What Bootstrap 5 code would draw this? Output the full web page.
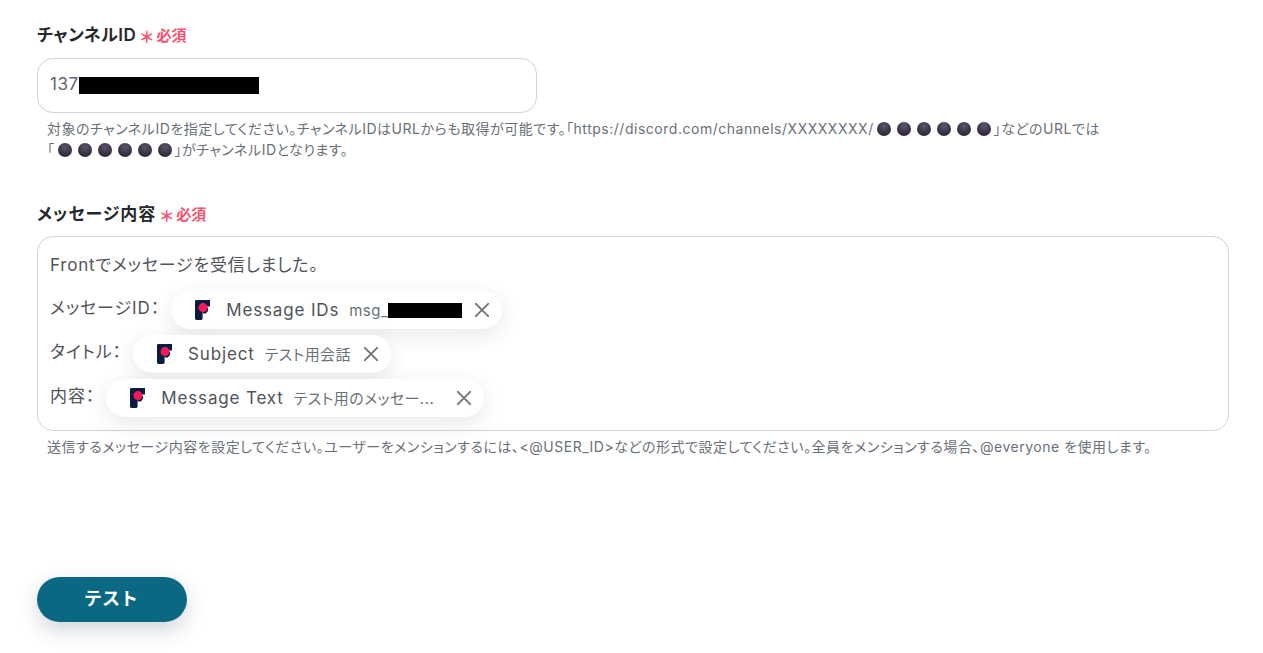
<!DOCTYPE html>
<html lang="ja">
<head>
<meta charset="utf-8">
<title>Form</title>
<link href="https://cdn.jsdelivr.net/npm/bootstrap@5.3.0/dist/css/bootstrap.min.css" rel="stylesheet">
<style>
html,body{height:653px;overflow:hidden;background:#fff}
body{font-family:Inter,"Noto Sans CJK JP",sans-serif;color:#50535b;font-feature-settings:"palt"}
.page-wrap{padding:24px 34px 0 37px;height:653px}
.fld-label{font-size:17px;font-weight:600;line-height:22px;color:#25282c;height:22px;letter-spacing:.5px}
.lab-wide{letter-spacing:.95px}
.req-star{color:#f9506b;font-size:16px;font-weight:700;line-height:22px;margin-left:4px;display:inline-block;vertical-align:-2px;letter-spacing:0}
.req-text{color:#f9506b;font-size:15px;font-weight:600;margin-left:3px;letter-spacing:0}
.id-box{width:500px;height:55px;margin-top:12px;border:1px solid #d1d3da;border-radius:16px;padding:0 12px 2px;font-size:17px;letter-spacing:.5px;color:#5f636c}
.redact{display:inline-block;background:#000;flex:none}
.id-redact{margin-top:2px}
.pill-redact{margin-bottom:2px}
.hint-text{font-size:14px;line-height:21px;letter-spacing:.52px;color:#6a7079;padding-left:10px;margin-top:5px;white-space:nowrap}
.dot-glyph{display:inline-block;width:14px;height:14px;border-radius:50%;margin:0 3px;vertical-align:-2px;background:radial-gradient(circle at 50% 30%,#5e5568,#332e40 65%,#28243a)}
.msg-box{width:1192px;height:195px;margin-top:11px;border:1px solid #d1d3da;border-radius:16px;padding:16px 12px 0;font-size:17px;letter-spacing:.8px;color:#50535b}
.msg-line{height:44px;white-space:nowrap}
.msg-first{height:24px;line-height:24px;margin-bottom:11px}
.line-lead{margin-bottom:2px;letter-spacing:.93px}
.pill-item{height:38px;background:#fff;border-radius:19px;box-shadow:0 6px 20px rgba(40,50,70,.11);padding:2px 13px 0 23px;margin-left:11px;font-size:17px;letter-spacing:.85px;color:#50535b}
.logo-mark{flex:none;margin-left:-1px;margin-right:14px;margin-bottom:2px}
.pill-val{font-size:15px;color:#6a7079;margin-left:10px;letter-spacing:.45px}
.pill-val-cut{width:150px}
.pill-x{margin-left:13px;margin-bottom:2px;flex:none}
.run-btn{width:150px;height:45px;background:#0b6883;color:#fff;border:0;border-radius:23px;font-size:18px;font-weight:700;box-shadow:0 8px 20px rgba(30,50,70,.2);margin-top:120px;padding:0 2px 2px 0}
.run-btn:hover{background:#0b6883;color:#fff}
.gap-sect{margin-top:43px}
</style>
</head>
<body>
<svg width="0" height="0" class="d-block" aria-hidden="true"><defs>
<symbol id="front-logo" viewBox="0 0 19 22"><path d="M3.4 1H17v6.6H9.6v12a1.4 1.4 0 0 1-1.4 1.4H3.4A1.4 1.4 0 0 1 2 19.6V2.4A1.4 1.4 0 0 1 3.4 1z" fill="#0b1d3f"/><path d="M9.6 7.6h3.6a3 3 0 0 1-3.6 6.4z" fill="#0b1d3f"/><circle cx="10" cy="8.6" r="4.5" fill="#f5185f"/></symbol>
<symbol id="close-x" viewBox="0 0 14 14"><path d="M0 0l14 14M14 0L0 14" stroke="#6f7278" stroke-width="1.8" fill="none"/></symbol>
</defs></svg>
<div class="page-wrap">
  <div class="fld-label">チャンネルID<span class="req-star">＊</span><span class="req-text">必須</span></div>
  <div class="id-box d-flex align-items-center">137<span class="redact id-redact" style="width:180px;height:17px"></span></div>
  <div class="hint-text">対象のチャンネルIDを指定してください。チャンネルIDはURLからも取得が可能です。「https://discord.com/channels/XXXXXXXX/<span class="dot-glyph"></span><span class="dot-glyph"></span><span class="dot-glyph"></span><span class="dot-glyph"></span><span class="dot-glyph"></span><span class="dot-glyph"></span>」などのURLでは<br>「<span class="dot-glyph"></span><span class="dot-glyph"></span><span class="dot-glyph"></span><span class="dot-glyph"></span><span class="dot-glyph"></span><span class="dot-glyph"></span>」がチャンネルIDとなります。</div>

  <div class="fld-label lab-wide gap-sect">メッセージ内容<span class="req-star">＊</span><span class="req-text">必須</span></div>
  <div class="msg-box">
    <div class="msg-first">Frontでメッセージを受信しました。</div>
    <div class="msg-line d-flex align-items-center"><span class="line-lead">メッセージID：</span>
      <span class="pill-item d-inline-flex align-items-center"><svg width="19" height="22" class="logo-mark"><use href="#front-logo"/></svg>Message IDs<span class="pill-val">msg_</span><span class="redact pill-redact" style="width:74px;height:15px"></span><svg class="pill-x" width="14" height="14"><use href="#close-x"/></svg></span>
    </div>
    <div class="msg-line d-flex align-items-center"><span class="line-lead">タイトル：</span>
      <span class="pill-item d-inline-flex align-items-center"><svg width="19" height="22" class="logo-mark"><use href="#front-logo"/></svg>Subject<span class="pill-val">テスト用会話</span><svg class="pill-x" width="14" height="14"><use href="#close-x"/></svg></span>
    </div>
    <div class="msg-line d-flex align-items-center"><span class="line-lead">内容：</span>
      <span class="pill-item d-inline-flex align-items-center"><svg width="19" height="22" class="logo-mark"><use href="#front-logo"/></svg>Message Text<span class="pill-val pill-val-cut">テスト用のメッセー...</span><svg class="pill-x" width="14" height="14"><use href="#close-x"/></svg></span>
    </div>
  </div>
  <div class="hint-text">送信するメッセージ内容を設定してください。ユーザーをメンションするには、&lt;@USER_ID&gt;などの形式で設定してください。全員をメンションする場合、@everyone を使用します。</div>
  <button class="btn run-btn d-block" type="button">テスト</button>
</div>
<script src="https://cdn.jsdelivr.net/npm/bootstrap@5.3.0/dist/js/bootstrap.bundle.min.js"></script>
</body>
</html>
